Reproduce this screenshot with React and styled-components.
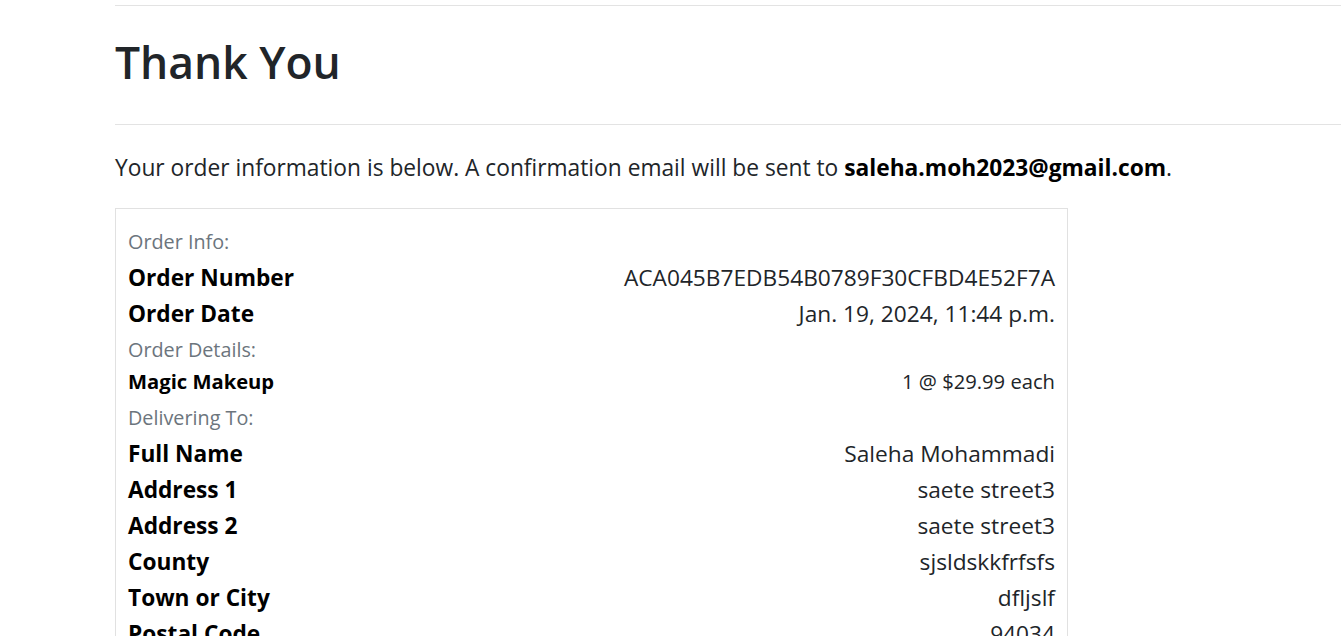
import React from 'react'
import styled, { createGlobalStyle } from 'styled-components'

const GlobalStyle = createGlobalStyle`
  body {
    margin: 0;
    background: #fff;
    font-family: "Open Sans", "Noto Sans", sans-serif;
    color: #212529;
  }
`

const Page = styled.div`
  padding: 5px 0 0 115px;
  overflow: hidden;
  height: 636px;
  box-sizing: border-box;
`

const Rule = styled.hr`
  margin: 0;
  border: 0;
  border-top: 1px solid #e3e3e3;
`

const Title = styled.h1`
  margin: 25px 0 31px;
  font-size: 44.4px;
  font-weight: 550;
  line-height: 62px;
  color: #212529;
`

const Lead = styled.p`
  margin: 26px 0 24px;
  font-size: 22.75px;
  line-height: 33px;
  color: #212529;
  b {
    color: #000;
    font-weight: 700;
  }
`

const Card = styled.div`
  width: 953px;
  box-sizing: border-box;
  border: 1px solid #e1e1e1;
  padding: 14px 12px 20px;
`

const Label = styled.div`
  height: 36px;
  line-height: 37px;
  font-size: 19.8px;
  color: #6c757d;
`

const Row = styled.div`
  display: flex;
  justify-content: space-between;
  align-items: center;
  height: ${p => (p.$small ? '28px' : '36px')};
  margin-bottom: ${p => (p.$small ? '4px' : '0')};
  font-size: ${p => (p.$small ? '20.2px' : '22.7px')};
`

const Key = styled.span`
  font-weight: 700;
  color: #000;
`

const Value = styled.span`
  color: #212529;
`

const App = () => {
  const delivery = [
    ['Full Name', 'Saleha Mohammadi'],
    ['Address 1', 'saete street3'],
    ['Address 2', 'saete street3'],
    ['County', 'sjsldskkfrfsfs'],
    ['Town or City', 'dfljslf'],
    ['Postal Code', '94034'],
  ]

  return (
    <>
      <GlobalStyle />
      <Page>
        <Rule />
        <Title>Thank You</Title>
        <Rule />
        <Lead>
          Your order information is below. A confirmation email will be sent to{' '}
          <b>saleha.moh2023@gmail.com</b>.
        </Lead>
        <Card>
          <Label>Order Info:</Label>
          <Row>
            <Key>Order Number</Key>
            <Value>ACA045B7EDB54B0789F30CFBD4E52F7A</Value>
          </Row>
          <Row>
            <Key>Order Date</Key>
            <Value>Jan. 19, 2024, 11:44 p.m.</Value>
          </Row>
          <Label>Order Details:</Label>
          <Row $small>
            <Key>Magic Makeup</Key>
            <Value>1 @ $29.99 each</Value>
          </Row>
          <Label>Delivering To:</Label>
          {delivery.map(([k, v]) => (
            <Row key={k}>
              <Key>{k}</Key>
              <Value>{v}</Value>
            </Row>
          ))}
        </Card>
      </Page>
    </>
  )
}

export default App
